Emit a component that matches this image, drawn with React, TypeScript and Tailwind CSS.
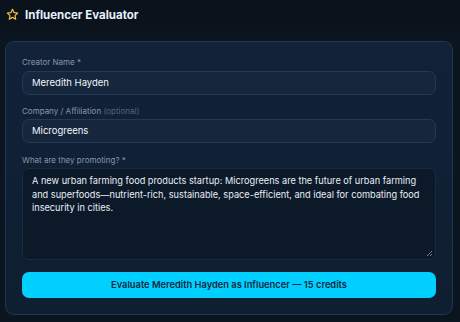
export default function App() {
  const name = "Meredith Hayden";
  return (
    <main
      className="h-[322px] w-[460px] overflow-hidden bg-[#0a1520] text-white"
      style={{ fontFamily: "Inter, 'Noto Sans', sans-serif" }}
    >
      <header className="flex h-[31px] items-center gap-[6px] bg-[#0a121b] px-[6px] pb-[2px]">
        <svg width="13" height="13" viewBox="0 0 24 24" fill="none" stroke="#f5c542" strokeWidth="2.2" strokeLinejoin="round">
          <path d="M12 2.5l2.9 6.1 6.6.8-4.9 4.6 1.3 6.6L12 17.3l-5.9 3.3 1.3-6.6-4.9-4.6 6.6-.8z" />
        </svg>
        <h1 className="text-[11.5px] font-bold leading-[14px] text-[#e6f1fb]">Influencer Evaluator</h1>
      </header>

      <div className="pl-[5px] pt-[10px]">
        <section className="w-[448px] rounded-[9px] border border-[#1d3850] bg-gradient-to-b from-[#112239] to-[#0f1e30] px-[16px] pb-[16px] pt-[15px]">
          <label className="block text-[8px] leading-[10px] text-[#8a96a7]">Creator Name *</label>
          <div className="mt-[4px] flex h-[24px] items-center rounded-[7px] border border-[#1f3c54] bg-[#16273d] px-[9px] text-[9.5px] text-[#f1f5f9]">
            {name}
          </div>

          <label className="mt-[11px] block text-[8px] leading-[10px] text-[#8a96a7]">
            Company / Affiliation <span className="text-[#55657a]">(optional)</span>
          </label>
          <div className="mt-[3px] flex h-[24px] items-center rounded-[7px] border border-[#1f3c54] bg-[#16273d] px-[9px] text-[9.5px] text-[#f1f5f9]">
            Microgreens
          </div>

          <label className="mt-[12px] block text-[8px] leading-[10px] text-[#8a96a7]">What are they promoting? *</label>
          <div className="relative mt-[3px] h-[92px] rounded-[7px] border border-[#172c40] bg-[#0c1929] px-[9px] py-[5px] text-[9.2px] leading-[13.5px] text-[#e8eef5]">
            A new urban farming food products startup: Microgreens are the future of urban farming and superfoods—nutrient-rich, sustainable, space-efficient, and ideal for combating food insecurity in cities.
            <svg className="absolute bottom-[2px] right-[2px]" width="7" height="7" viewBox="0 0 7 7" stroke="#8a97a8" strokeWidth="0.8">
              <path d="M1 6L6 1M4 6L6 4" />
            </svg>
          </div>

          <button className="mt-[12px] flex h-[26px] w-full items-center justify-center rounded-[7px] bg-[#00cfff] text-[9.3px] font-semibold text-[#0f2a40]">
            Evaluate {name} as Influencer — 15 credits
          </button>
        </section>
      </div>
    </main>
  );
}
